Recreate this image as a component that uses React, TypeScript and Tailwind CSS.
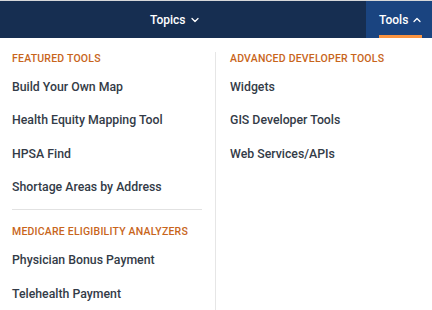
import { ChevronDown, ChevronUp } from "lucide-react";

const featured = [
  "Build Your Own Map",
  "Health Equity Mapping Tool",
  "HPSA Find",
  "Shortage Areas by Address",
];
const medicare = ["Physician Bonus Payment", "Telehealth Payment"];
const advanced = ["Widgets", "GIS Developer Tools", "Web Services/APIs"];

function Heading({ children }: { children: string }) {
  return (
    <h3 className="text-[10.5px] leading-[14px] font-medium tracking-[0.02em] uppercase text-[#c8651b] mb-[5px] whitespace-nowrap">
      {children}
    </h3>
  );
}

function Links({ items }: { items: string[] }) {
  return (
    <ul className="flex flex-col">
      {items.map((item) => (
        <li key={item}>
          <a href="#" className="block py-2 text-[12.3px] leading-[17.33px] font-medium text-[#333b47]">
            {item}
          </a>
        </li>
      ))}
    </ul>
  );
}

export default function App() {
  return (
    <div className="w-[432px] h-[310px] bg-white overflow-hidden font-['Roboto',sans-serif]">
      <nav className="h-[38px] border-t border-[#d6d7d9] bg-[#162e51] flex items-stretch text-white">
        <div className="flex-1 flex items-center pl-[150px]">
          <button className="flex items-center gap-[3px] text-[12px] font-medium">
            Topics <ChevronDown size={12} strokeWidth={2.5} />
          </button>
        </div>
        <div className="relative w-[66px] bg-[#1a4480] flex items-center pl-[13px]">
          <button className="flex items-center gap-[3px] text-[12px] font-medium">
            Tools <ChevronUp size={12} strokeWidth={2.5} />
          </button>
          <span className="absolute bottom-0 left-[13px] w-[43px] h-[3px] bg-[#fa9441]" />
        </div>
      </nav>

      <div className="grid grid-cols-[216px_1fr] mt-[14px]">
        <div className="border-r border-[#e6e6e6] pl-3 pr-[13px] pb-[10px]">
          <Heading>Featured Tools</Heading>
          <Links items={featured} />
          <hr className="border-[#e2e2e2] mt-[5px] mb-[15px]" />
          <Heading>Medicare Eligibility Analyzers</Heading>
          <Links items={medicare} />
        </div>
        <div className="pl-[14px]">
          <Heading>Advanced Developer Tools</Heading>
          <Links items={advanced} />
        </div>
      </div>
    </div>
  );
}
